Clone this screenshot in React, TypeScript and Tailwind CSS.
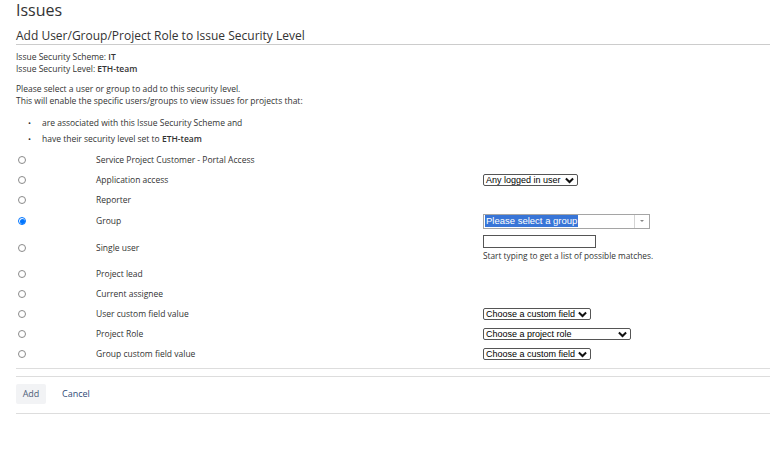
import React from "react";

const FONT = "font-['Open_Sans','Noto_Sans',sans-serif]";
const ARIAL = "font-['Liberation_Sans',Arial,sans-serif]";

function Chevron() {
  return (
    <svg width="9" height="7" viewBox="0 0 10 7" className="shrink-0">
      <path d="M1 1.2 5 5.2 9 1.2" fill="none" stroke="#111" strokeWidth="2.2" />
    </svg>
  );
}

function Radio({ checked = false }: { checked?: boolean }) {
  if (checked) {
    return (
      <div className="ml-[2px] flex h-[8px] w-[8px] items-center justify-center rounded-full border border-[#0075ff] bg-white">
        <div className="h-[5px] w-[5px] rounded-full bg-[#0075ff]" />
      </div>
    );
  }
  return <div className="ml-[2px] h-[8px] w-[8px] rounded-full border border-[#8a8a8a] bg-white" />;
}

function FakeSelect({ label, width }: { label: string; width: string }) {
  return (
    <div
      className={`${ARIAL} ${width} flex h-[12px] items-center justify-between rounded-[2px] border border-[#555] bg-white pl-[2px] pr-[3px] text-[9px] leading-none text-black`}
    >
      <span>{label}</span>
      <Chevron />
    </div>
  );
}

type Row = {
  label: string;
  h: string;
  checked?: boolean;
  right?: React.ReactNode;
};

const rows: Row[] = [
  { label: "Service Project Customer - Portal Access", h: "h-[20px]" },
  {
    label: "Application access",
    h: "h-[20px]",
    right: <FakeSelect label="Any logged in user" width="w-[95px]" />,
  },
  { label: "Reporter", h: "h-[20px]" },
  {
    label: "Group",
    h: "h-[22px]",
    checked: true,
    right: (
      <div className="flex h-[15px] w-[167px] items-stretch border border-[#a5a5a5] bg-white">
        <div className="flex flex-1 items-center pl-[1px]">
          <span className={`${ARIAL} bg-[#3875d7] px-[1px] text-[9.5px] leading-[12px] text-white`}>
            Please select a group
          </span>
        </div>
        <div className="flex w-[15px] items-center justify-center border-l border-[#d4d4d4]">
          <div className="h-0 w-0 border-x-[2.5px] border-t-[2.5px] border-x-transparent border-t-[#888]" />
        </div>
      </div>
    ),
  },
  {
    label: "Single user",
    h: "h-[32px]",
    right: (
      <div className="flex flex-col">
        <div className="h-[13px] w-[113px] border border-[#555] bg-white" />
        <div className="mt-[2px] text-[8.3px] leading-[11px] text-[#333]">
          Start typing to get a list of possible matches.
        </div>
      </div>
    ),
  },
  { label: "Project lead", h: "h-[20px]" },
  { label: "Current assignee", h: "h-[20px]" },
  {
    label: "User custom field value",
    h: "h-[20px]",
    right: <FakeSelect label="Choose a custom field" width="w-[108px]" />,
  },
  {
    label: "Project Role",
    h: "h-[20px]",
    right: <FakeSelect label="Choose a project role" width="w-[148px]" />,
  },
  {
    label: "Group custom field value",
    h: "h-[20px]",
    right: <FakeSelect label="Choose a custom field" width="w-[108px]" />,
  },
];

export default function App() {
  return (
    <div className={`${FONT} h-[457px] w-[770px] overflow-hidden bg-white pl-4 text-[#333]`}>
      <h1 className="text-[16px] leading-[20px] font-normal">Issues</h1>

      <h2 className="mt-[9px] border-b border-[#ccc] pb-[1px] text-[12px] leading-[14px] font-normal">
        Add User/Group/Project Role to Issue Security Level
      </h2>

      <div className="mt-[6px] text-[8.5px] leading-[12px]">
        <p>
          Issue Security Scheme: <b className="font-semibold">IT</b>
        </p>
        <p>
          Issue Security Level: <b className="font-semibold">ETH-team</b>
        </p>
      </div>

      <div className="mt-[8px] text-[8.5px] leading-[12px]">
        <p>Please select a user or group to add to this security level.</p>
        <p>This will enable the specific users/groups to view issues for projects that:</p>
      </div>

      <ul className="mt-[8px] text-[8.5px] leading-[16px]">
        <li className="flex items-center">
          <span className="w-[26px] pl-[12px] text-[8px]">•</span>
          are associated with this Issue Security Scheme and
        </li>
        <li className="flex items-center">
          <span className="w-[26px] pl-[12px] text-[8px]">•</span>
          <span>
            have their security level set to <b className="font-semibold">ETH-team</b>
          </span>
        </li>
      </ul>

      <div className="mt-[3px] text-[8.5px]">
        {rows.map((r) => (
          <div key={r.label} className={`grid grid-cols-[80px_387px_1fr] items-center ${r.h}`}>
            <Radio checked={r.checked} />
            <div>{r.label}</div>
            <div>{r.right}</div>
          </div>
        ))}
      </div>

      <div className="mt-[4px] border-b border-[#ddd]" />

      <div className="mt-[7px] border-t border-[#ddd] pt-[7px] pb-[9px]">
        <div className="flex items-center gap-[16px] text-[9px]">
          <div className="flex h-[20px] w-[30px] items-center justify-center rounded-[2px] bg-[#f2f3f5] text-[#505f79]">
            Add
          </div>
          <div className="text-[#2f4b78]">Cancel</div>
        </div>
      </div>
      <div className="border-b border-[#ddd]" />
    </div>
  );
}
